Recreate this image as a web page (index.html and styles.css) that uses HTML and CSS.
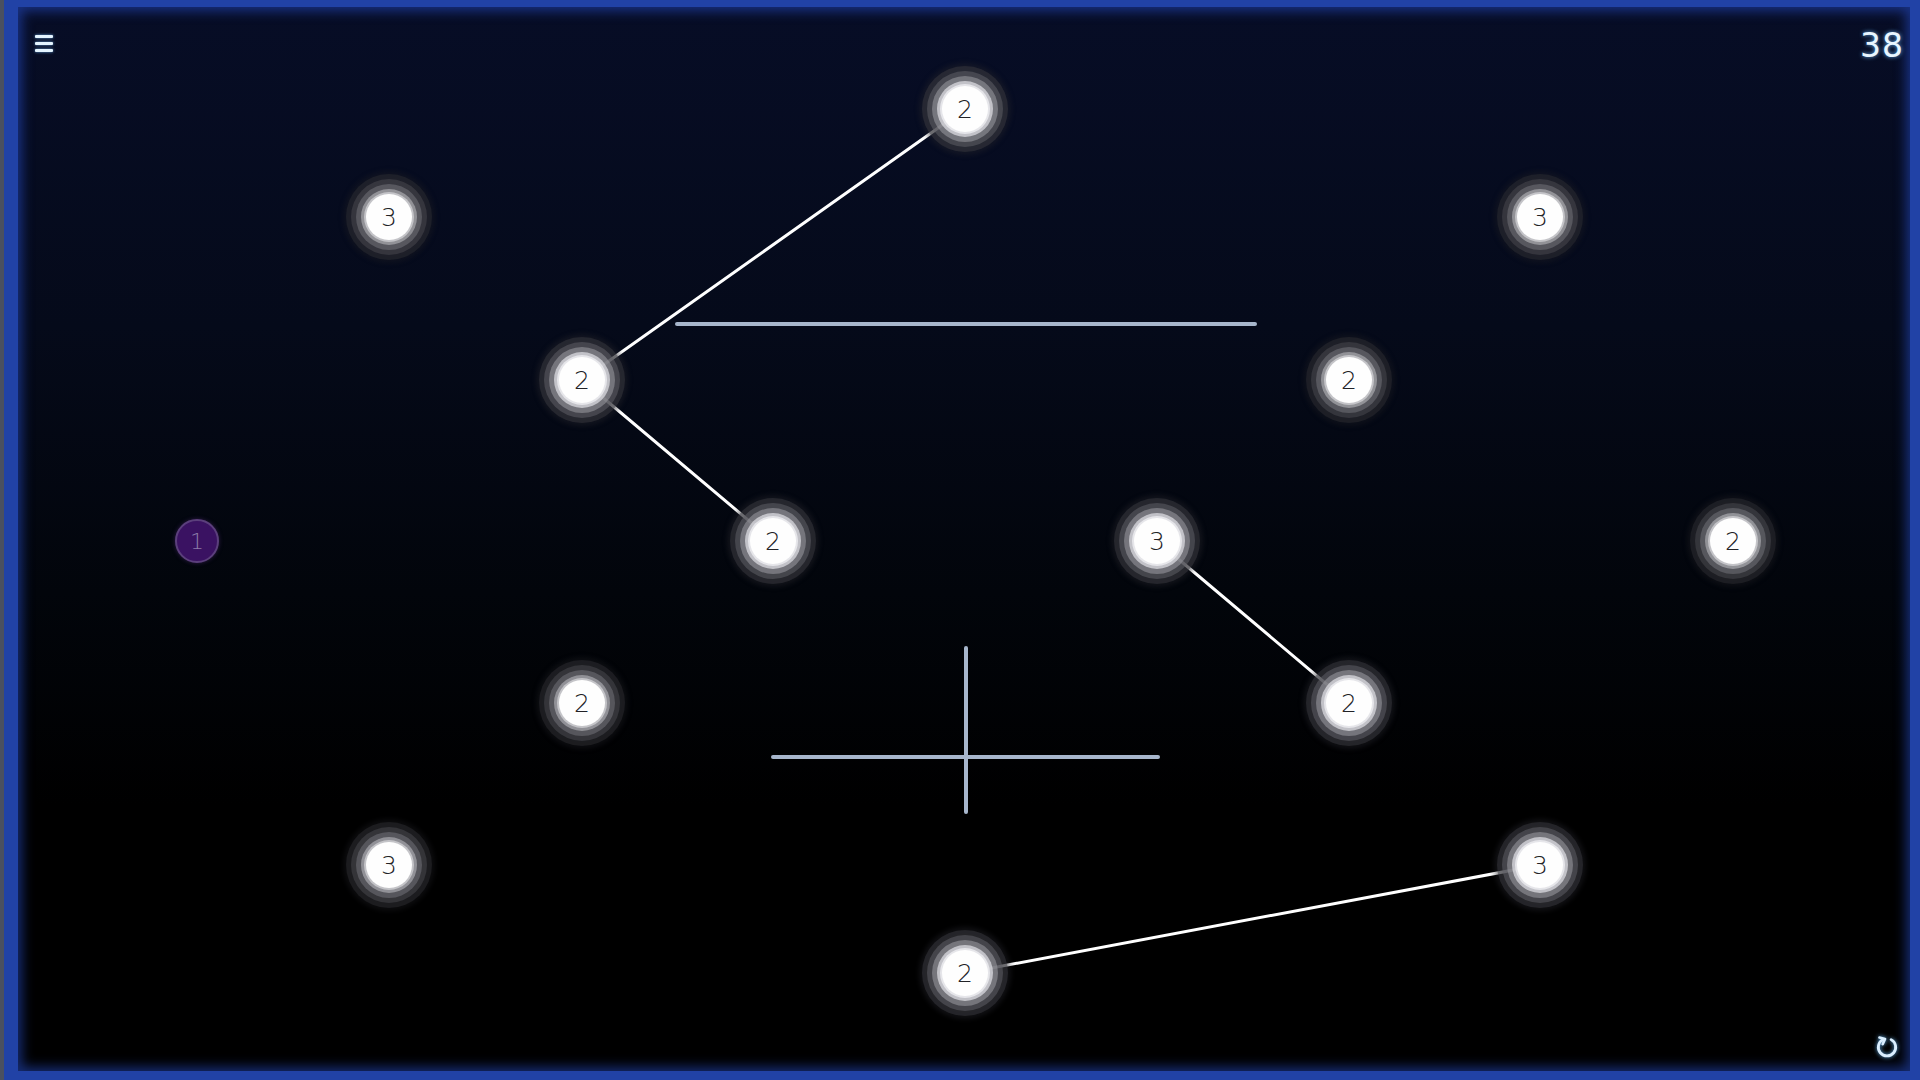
FILE: index.html
```html
<!DOCTYPE html>
<html lang="en">
<head>
<meta charset="utf-8">
<title>Bridges</title>
<link rel="stylesheet" href="styles.css">
</head>
<body>
<div class="screen">
  <div class="frame">
    <header class="topbar">
      <button class="menu" aria-label="Menu"><span></span><span></span><span></span></button>
      <div class="score">38</div>
    </header>

    <div class="board">
      <svg class="links" width="1920" height="1080" viewBox="0 0 1920 1080">
        <g class="hint">
          <line x1="677" y1="324" x2="1255" y2="324"/>
          <line x1="966" y1="648" x2="966" y2="812"/>
          <line x1="773" y1="757" x2="1158" y2="757"/>
        </g>
        <g class="bridge">
          <line x1="965" y1="109" x2="582" y2="380"/>
          <line x1="582" y1="380" x2="773" y2="541"/>
          <line x1="1157" y1="541" x2="1349" y2="703"/>
          <line x1="965" y1="973" x2="1540" y2="865"/>
        </g>
      </svg>

      <div class="node lit" style="left:965px;top:109px">2</div>
      <div class="node" style="left:389px;top:217px">3</div>
      <div class="node" style="left:1540px;top:217px">3</div>
      <div class="node lit" style="left:582px;top:380px">2</div>
      <div class="node" style="left:1349px;top:380px">2</div>
      <div class="node done" style="left:197px;top:541px">1</div>
      <div class="node lit" style="left:773px;top:541px">2</div>
      <div class="node lit" style="left:1157px;top:541px">3</div>
      <div class="node" style="left:1733px;top:541px">2</div>
      <div class="node" style="left:582px;top:703px">2</div>
      <div class="node lit" style="left:1349px;top:703px">2</div>
      <div class="node" style="left:389px;top:865px">3</div>
      <div class="node lit" style="left:1540px;top:865px">3</div>
      <div class="node lit" style="left:965px;top:973px">2</div>
    </div>

    <button class="reset" aria-label="Restart">
      <svg width="26" height="26" viewBox="0 0 24 24"><path d="M8.2 5.2 A8 8 0 1 0 15.8 5.2" fill="none" stroke="currentColor" stroke-width="2.6" stroke-linecap="round"/><path d="M5 3.2 L10.2 4.6 L8 9.4" fill="none" stroke="currentColor" stroke-width="2.4" stroke-linecap="round" stroke-linejoin="round"/></svg>
    </button>
  </div>
</div>
</body>
</html>
```

FILE: styles.css
```css
html, body {
  margin: 0;
  padding: 0;
  width: 1920px;
  height: 1080px;
  overflow: hidden;
  background: #000;
  font-family: "DejaVu Sans", "Noto Sans", sans-serif;
}

.screen {
  width: 1920px;
  height: 1080px;
  box-sizing: border-box;
  padding-left: 4px;
  background: #4a5060;
}

.frame {
  position: relative;
  width: 100%;
  height: 100%;
  box-sizing: border-box;
  border-style: solid;
  border-color: #2142a6;
  border-width: 7px 10px 9px 14px;
  background: linear-gradient(180deg, #070d26 0%, #050a1a 30%, #02050b 55%, #000 75%, #000 100%);
  box-shadow: inset 0 0 12px 4px rgba(40, 80, 210, 0.55);
  overflow: hidden;
}

.topbar {
  position: absolute;
  left: 0;
  right: 0;
  top: 0;
  display: flex;
  justify-content: space-between;
  align-items: flex-start;
  padding: 21px 6px 0 17px;
  z-index: 3;
  pointer-events: none;
}

.menu {
  display: flex;
  flex-direction: column;
  gap: 4px;
  padding: 0;
  margin: 0;
  border: 0;
  background: none;
  margin-top: 7px;
}

.menu span {
  display: block;
  width: 18px;
  height: 3px;
  background: #e4f4ff;
  border-radius: 1px;
  box-shadow: 0 0 3px rgba(120, 190, 255, 0.8);
}

.score {
  font-family: "DejaVu Sans", sans-serif;
  font-size: 33px;
  line-height: 1;
  letter-spacing: 1px;
  color: #e8f6ff;
  text-shadow: 0 0 4px rgba(110, 190, 255, 0.9);
  margin-top: 1px;
}

.board {
  position: absolute;
  left: -14px;
  top: -7px;
  width: 1920px;
  height: 1080px;
}

.links {
  position: absolute;
  left: -4px;
  top: 0;
}

.hint line {
  stroke: #a7b6cc;
  stroke-width: 4;
  stroke-linecap: round;
}

.bridge line {
  stroke: #ffffff;
  stroke-width: 3;
  stroke-linecap: round;
}

.node {
  position: absolute;
  width: 46px;
  height: 46px;
  margin-left: -27px;
  margin-top: -23px;
  border-radius: 50%;
  background: #fefefe;
  display: flex;
  align-items: center;
  justify-content: center;
  font-family: "DejaVu Sans", sans-serif;
  font-size: 25px;
  font-weight: 300;
  color: #222226;
  box-shadow:
    0 0 0 2px #c4c4c8,
    0 0 0 5px rgba(185, 185, 190, 0.6),
    0 0 0 10px rgba(115, 115, 122, 0.55),
    0 0 0 15px rgba(75, 75, 82, 0.5),
    0 0 0 20px rgba(48, 48, 54, 0.45),
    0 0 5px 23px rgba(30, 30, 36, 0.4);
  z-index: 2;
}

.node.lit {
  box-shadow:
    0 0 0 2px #e6e6ea,
    0 0 0 5px rgba(220, 220, 225, 0.75),
    0 0 0 10px rgba(150, 150, 156, 0.6),
    0 0 0 15px rgba(95, 95, 102, 0.55),
    0 0 0 20px rgba(58, 58, 64, 0.5),
    0 0 5px 23px rgba(36, 36, 42, 0.45);
}

.node.done {
  width: 44px;
  height: 44px;
  margin-left: -26px;
  margin-top: -22px;
  box-sizing: border-box;
  background: #3a1262;
  border: 2px solid #5b3f7c;
  color: #8c7aa8;
  font-size: 22px;
  box-shadow: 0 0 4px rgba(90, 50, 130, 0.5);
}

.reset {
  position: absolute;
  right: 10px;
  bottom: 11px;
  padding: 0;
  border: 0;
  background: none;
  color: #dbefff;
  filter: drop-shadow(0 0 2px rgba(110, 190, 255, 0.9));
  z-index: 3;
}
.reset svg { display: block; }
```
